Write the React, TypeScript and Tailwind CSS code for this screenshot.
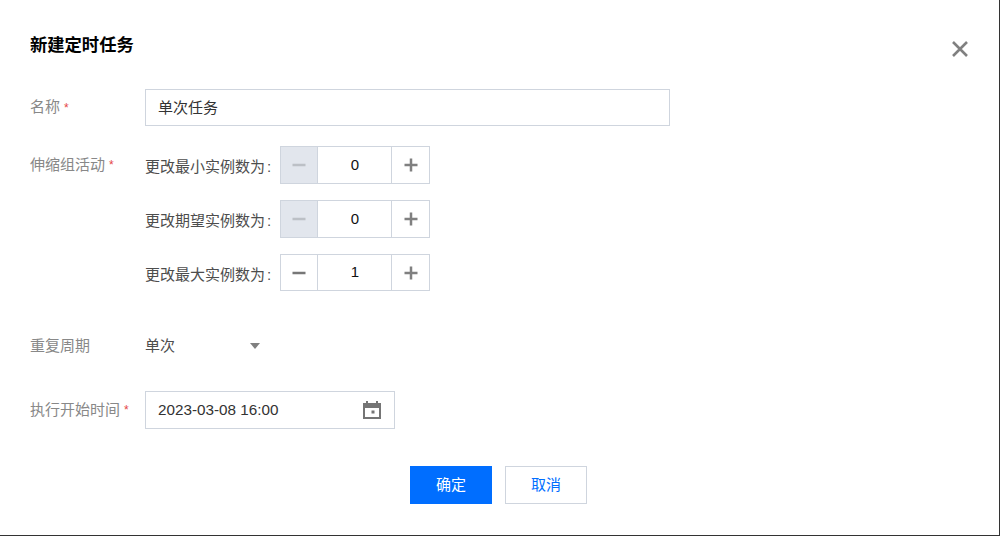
import React from "react";

const font = { fontFamily: '"Liberation Sans", "Noto Sans CJK SC", sans-serif' };

function Star() {
  return <span className="ml-[4px] text-[12px] text-[#e54545]">*</span>;
}

function Stepper({ label, value, disabled, h, pt }: { label: string; value: string; disabled?: boolean; h: string; pt: string }) {
  return (
    <div className={`flex items-center ${h}`}>
      <span className={`w-[135px] whitespace-nowrap text-[15px] leading-[20px] text-[#4d4d4d] ${pt}`}>
        {label}<span className="ml-[2px]">:</span>
      </span>
      <div className="flex h-full w-[150px] border border-[#cfd5de]">
        <div className={`flex w-[37px] items-center justify-center border-r border-[#cfd5de] ${disabled ? "bg-[#e2e6ed]" : "bg-white"}`}>
          <svg width="14" height="14" viewBox="0 0 14 14">
            <rect x="0.5" y="5.75" width="13" height="2.5" fill={disabled ? "#bcc0c6" : "#777"} />
          </svg>
        </div>
        <div className="flex flex-1 items-center justify-center pl-[1px] text-[15px] text-[#111]">{value}</div>
        <div className="flex w-[38px] items-center justify-center border-l border-[#cfd5de]">
          <svg width="14" height="14" viewBox="0 0 14 14">
            <rect x="0.5" y="5.75" width="13" height="2.5" fill="#808080" />
            <rect x="5.75" y="0.5" width="2.5" height="13" fill="#808080" />
          </svg>
        </div>
      </div>
    </div>
  );
}

export default function App() {
  return (
    <div className="h-[536px] w-[1000px] border-r border-b border-[#333] bg-white" style={font}>
      <div className="flex h-[89px] items-start justify-between pl-[30px] pr-[30px] pt-[34px]">
        <h1 className="text-[17.3px] leading-[22px] font-bold text-black">新建定时任务</h1>
        <svg className="mt-[6px]" width="18" height="18" viewBox="0 0 18 18">
          <path d="M2 2 L16 16 M16 2 L2 16" stroke="#808080" strokeWidth="2.6" fill="none" />
        </svg>
      </div>

      <div className="flex pl-[30px]">
        <div className="flex h-[37px] w-[115px] items-center text-[15px] text-[#888]">名称<Star /></div>
        <div className="flex h-[37px] w-[525px] items-center border border-[#cfd5de] pl-[12px] pt-[1px] text-[15px] text-[#333]">单次任务</div>
      </div>

      <div className="mt-[20px] flex pl-[30px]">
        <div className="flex h-[38px] w-[115px] items-center text-[15px] text-[#888]">伸缩组活动<Star /></div>
        <div className="flex flex-col gap-[16px]">
          <Stepper h="h-[38px]" pt="pt-[3px]" label="更改最小实例数为" value="0" disabled />
          <Stepper h="h-[38px]" pt="pt-[3px]" label="更改期望实例数为" value="0" disabled />
          <Stepper h="h-[37px]" pt="pt-[5px]" label="更改最大实例数为" value="1" />
        </div>
      </div>

      <div className="mt-[36px] flex h-[38px] items-center pl-[30px]">
        <div className="w-[115px] text-[15px] text-[#888]">重复周期</div>
        <div className="flex w-[115px] items-center justify-between text-[15px] text-[#4d4d4d]">
          <span>单次</span>
          <svg width="10" height="6" viewBox="0 0 10 6"><path d="M0 0 H10 L5 6 Z" fill="#808080" /></svg>
        </div>
      </div>

      <div className="mt-[26px] flex pl-[30px]">
        <div className="flex h-[38px] w-[115px] items-center whitespace-nowrap text-[15px] text-[#888]">执行开始时间<Star /></div>
        <div className="flex h-[38px] w-[250px] items-center justify-between border border-[#cfd5de] pl-[12px] pr-[13px] text-[15.25px] text-[#333]">
          <span>2023-03-08 16:00</span>
          <svg width="18" height="18" viewBox="0 0 18 18">
            <path fillRule="evenodd" fill="#757575" d="M3 0h2v2h8V0h2v2h3v16H0V2h3V0zM2 7v9h14V7H2zm6.5 2.5h3v3h-3v-3z" />
          </svg>
        </div>
      </div>

      <div className="mt-[37px] flex justify-center gap-[13px] pr-[2px]">
        <button className="h-[38px] w-[82px] bg-[#006eff] text-[15px] text-white">确定</button>
        <button className="h-[38px] w-[82px] border border-[#cfd5de] bg-white text-[15px] text-[#006eff]">取消</button>
      </div>
    </div>
  );
}
